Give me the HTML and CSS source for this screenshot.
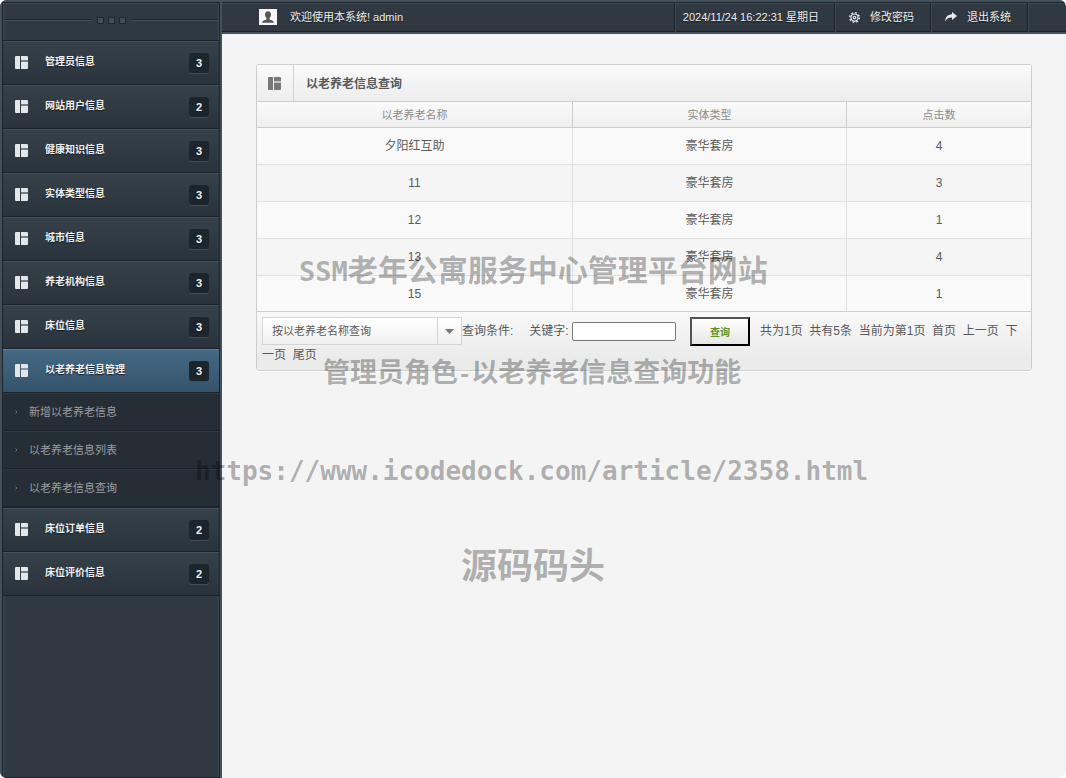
FILE: index.html
```html
<!DOCTYPE html>
<html lang="zh-CN">
<head>
<meta charset="utf-8">
<title>以老养老信息查询</title>
<link rel="stylesheet" href="styles.css">
</head>
<body>
<svg class="defs" width="0" height="0" aria-hidden="true">
  <symbol id="blocks" viewBox="0 0 14 13"><path d="M1 0h4v13H1a1 1 0 0 1-1-1V1a1 1 0 0 1 1-1zM6 0H12a1 1 0 0 1 1 1v3H6zM6 6H13v6a1 1 0 0 1-1 1H6z"/><path opacity=".4" d="M6 4h7v2H6z"/></symbol>
</svg>
<div class="shell">
  <aside class="sidebar">
    <div class="grip"><i></i><b></b><b></b><b></b><i></i></div>
    <nav class="menu">
      <a class="item" href="#"><svg class="ico"><use href="#blocks"/></svg><span class="label">管理员信息</span><span class="badge">3</span></a>
      <a class="item" href="#"><svg class="ico"><use href="#blocks"/></svg><span class="label">网站用户信息</span><span class="badge">2</span></a>
      <a class="item" href="#"><svg class="ico"><use href="#blocks"/></svg><span class="label">健康知识信息</span><span class="badge">3</span></a>
      <a class="item" href="#"><svg class="ico"><use href="#blocks"/></svg><span class="label">实体类型信息</span><span class="badge">3</span></a>
      <a class="item" href="#"><svg class="ico"><use href="#blocks"/></svg><span class="label">城市信息</span><span class="badge">3</span></a>
      <a class="item" href="#"><svg class="ico"><use href="#blocks"/></svg><span class="label">养老机构信息</span><span class="badge">3</span></a>
      <a class="item" href="#"><svg class="ico"><use href="#blocks"/></svg><span class="label">床位信息</span><span class="badge">3</span></a>
      <a class="item active" href="#"><svg class="ico"><use href="#blocks"/></svg><span class="label">以老养老信息管理</span><span class="badge">3</span></a>
      <div class="submenu">
        <a class="sub" href="#"><svg class="chev" viewBox="0 0 3 4"><path d="M.5 .5L2 2L.5 3.500"/></svg>新增以老养老信息</a>
        <a class="sub" href="#"><svg class="chev" viewBox="0 0 3 4"><path d="M.5 .5L2 2L.5 3.500"/></svg>以老养老信息列表</a>
        <a class="sub" href="#"><svg class="chev" viewBox="0 0 3 4"><path d="M.5 .5L2 2L.5 3.500"/></svg>以老养老信息查询</a>
      </div>
      <a class="item" href="#"><svg class="ico"><use href="#blocks"/></svg><span class="label">床位订单信息</span><span class="badge">2</span></a>
      <a class="item" href="#"><svg class="ico"><use href="#blocks"/></svg><span class="label">床位评价信息</span><span class="badge">2</span></a>
    </nav>
  </aside>
  <div class="page">
    <header class="topbar">
      <div class="welcome">
        <svg class="avatar" viewBox="0 0 18 16"><rect width="18" height="16" fill="#f6f6f6"/><path fill="#555" d="M9 2.300c2 0 3 1.300 3 3.200 0 1.500-.6 2.800-1.500 3.500v1.200c.3.700 4.300 1.100 4.500 3.500H3c.2-2.400 4.200-2.800 4.500-3.500V9C6.600 8.300 6 7 6 5.500c0-1.900 1-3.200 3-3.200z"/></svg>
        <span>欢迎使用本系统! admin</span>
      </div>
      <div class="cell date">2024/11/24 16:22:31 星期日</div>
      <a class="cell" href="#"><svg class="gear" viewBox="0 0 10 10" fill="none" stroke="#e8eaec"><circle cx="5" cy="5" r="4.400" stroke-width="1.200" stroke-dasharray="1.700 1.750"/><circle cx="5" cy="5" r="3.200" stroke-width="1.100"/><circle cx="5" cy="5" r="1.200" stroke-width="1"/></svg>修改密码</a>
      <a class="cell" href="#"><svg class="share" viewBox="0 0 12 10"><path fill="#e8eaec" d="M7 0l5 4-5 4V5.600C4 5.500 2 6.200.3 9.600 0 5.500 2.500 2.500 7 2.300z"/></svg>退出系统</a>
      <div class="cell tail"></div>
    </header>
    <main class="content">
      <section class="panel">
        <div class="panel-head"><span class="panel-ico"><svg class="ico"><use href="#blocks"/></svg></span><h1>以老养老信息查询</h1></div>
        <table>
          <colgroup><col class="c-name"><col class="c-type"><col></colgroup>
          <thead><tr><th>以老养老名称</th><th>实体类型</th><th>点击数</th></tr></thead>
          <tbody>
            <tr><td>夕阳红互助</td><td>豪华套房</td><td>4</td></tr>
            <tr><td>11</td><td>豪华套房</td><td>3</td></tr>
            <tr><td>12</td><td>豪华套房</td><td>1</td></tr>
            <tr><td>13</td><td>豪华套房</td><td>4</td></tr>
            <tr><td>15</td><td>豪华套房</td><td>1</td></tr>
          </tbody>
        </table>
        <form class="panel-foot"><span class="picker"><select id="field" aria-label="查询条件"><option>按以老养老名称查询</option></select><svg class="arrow" viewBox="0 0 9 5"><path d="M0 0h9L4.500 5z"/></svg></span><label class="cond" for="field">查询条件:</label><label for="kw">关键字:</label> <input id="kw" type="text"><button type="button">查询</button><span class="pager">共为1页&nbsp; 共有5条&nbsp; 当前为第1页&nbsp; <a href="#">首页</a>&nbsp; <a href="#">上一页</a>&nbsp; <a href="#">下一页</a>&nbsp; <a href="#">尾页</a></span></form>
      </section>
    </main>
  </div>
  <div class="mark mark-a"><span class="latin">SSM</span>老年公寓服务中心管理平台网站</div>
  <div class="mark mark-b">管理员角色<span class="latin">-</span>以老养老信息查询功能</div>
  <div class="mark mark-c">https://www.icodedock.com/article/2358.html</div>
  <div class="mark mark-d">源码码头</div>
</div>
</body>
</html>
```

FILE: styles.css
```css
* { box-sizing: border-box; }
html { background: #fff; }
body {
  margin: 0;
  font: 12px/18px "Liberation Sans", "Noto Sans CJK SC", sans-serif;
  color: #595959;
}
a { color: inherit; text-decoration: none; }
.defs { position: absolute; }

.shell {
  position: relative;
  display: grid;
  grid-template-columns: 222px 1fr;
  min-height: 100vh;
  overflow: hidden;
  border-radius: 7px;
  background: #f4f4f4;
}

/* Sidebar */
.sidebar {
  border: solid #434f59;
  border-width: 2px 2px 0;
  background: #303842;
  box-shadow: inset 1px 1px #1b242c, inset -1px -1px #1b242c, inset 2px 2px #3d4953, inset -2px 0 #3d4953;
}
.grip {
  display: flex;
  align-items: center;
  gap: 4px;
  height: 38px;
  padding: 0 2px 2px;
}
.grip i { flex: 1; height: 2px; border-top: 1px solid #1f2831; border-bottom: 1px solid #414d57; }
.grip b { width: 7px; height: 7px; border: 1px solid #1f2831; background: #414e58; }
.grip i:first-child { margin-right: 1px; }
.grip i:last-child { margin-left: 1px; }
.menu { padding: 0 1px; border-bottom: 1px solid #1b242c; }
.item {
  display: flex;
  align-items: center;
  height: 44px;
  padding: 0 10px 0 12px;
  border-top: 1px solid #1b242c;
  background: linear-gradient(#36414a, #2a333c);
  box-shadow: inset 0 1px #44515b;
  color: #f2f2f2;
  font-size: 10px;
  font-weight: bold;
  text-shadow: 0 1px 1px #151b20;
}
.item.active {
  background: linear-gradient(#456a85, #34536a);
  box-shadow: inset 0 1px #5f8199;
}
.ico { flex: none; width: 14px; height: 13px; fill: #e4e5e6; }
.label { flex: 1; padding: 0 0 2px 16px; }
.badge {
  width: 20px;
  height: 20px;
  border-radius: 3px;
  background: #1c252c;
  box-shadow: 0 1px #414e58;
  font-size: 11px;
  line-height: 20px;
  text-align: center;
}
.submenu { border-top: 1px solid #1b242c; background: #1b242c; }
.sub {
  display: flex;
  align-items: center;
  gap: 11px;
  height: 38px;
  padding-left: 12px;
  border-bottom: 1px solid #1b242c;
  background: #252d35;
  box-shadow: inset 0 1px #2f3941;
  color: #9a9fa3;
  font-size: 11px;
}
.chev { width: 3px; height: 4px; fill: none; stroke: #8b9196; stroke-width: .7; }

/* Top bar */
.page { min-width: 0; }
.topbar {
  display: flex;
  height: 34px;
  border: solid #434f59;
  border-width: 2px 0;
  background: #303842;
  box-shadow: inset 0 1px #1b242c, inset 0 -1px #1b242c, inset 0 2px #3d4953;
  color: #edeff0;
  font-size: 11px;
  text-shadow: 0 1px 1px #151b20;
}
.welcome { flex: 1; display: flex; align-items: center; gap: 13px; padding-left: 37px; }
.avatar { width: 18px; height: 16px; }
.cell {
  display: flex;
  align-items: center;
  gap: 10px;
  height: 30px;
  padding: 0 16px 0 14px;
  border-left: 1px solid #1b242c;
  box-shadow: inset 1px 0 #3d4953, inset 0 -1px #1b242c;
}
.date { padding: 0 15px 0 8px; }
.tail { width: 39px; padding: 0; }
.gear { width: 11px; height: 11px; }
.share { width: 12px; height: 10px; }

/* Panel */
.content { padding: 30px 34px; }
.panel {
  border: 1px solid #cdcdcd;
  border-radius: 3px;
  background: #f9f9f9;
  box-shadow: 0 1px #fff;
  overflow: hidden;
}
.panel-head {
  display: flex;
  height: 37px;
  border-bottom: 1px solid #cdcdcd;
  background: linear-gradient(#fafafa, #ededed);
}
.panel-ico {
  display: flex;
  align-items: center;
  justify-content: center;
  width: 37px;
  border-right: 1px solid #d3d3d3;
}
.panel-ico .ico { fill: #777; }
h1 { margin: 0; padding-left: 12px; font-size: 12px; line-height: 38px; }
table { width: 100%; table-layout: fixed; border-collapse: separate; border-spacing: 0; }
.c-name { width: 40.7%; }
.c-type { width: 35.4%; }
th, td { padding: 0; text-align: center; border-left: 1px solid #dfdfdf; }
th:first-child, td:first-child { border-left: 0; }
th {
  height: 26px;
  border-bottom: 1px solid #cdcdcd;
  border-left-color: #cdcdcd;
  background: linear-gradient(#fafafa, #efefef);
  color: #8c8c8c;
  font-size: 11px;
  font-weight: normal;
}
td { height: 37px; border-bottom: 1px solid #dfdfdf; }
tbody tr:nth-child(even) { background: #f5f5f5; }
tbody tr:last-child td { height: 36px; border-bottom-color: #cdcdcd; }
.panel-foot { padding: 5px 5px 6px; background: linear-gradient(#f9f9f9, #ebebeb 80%); }
.picker { position: relative; display: inline-block; width: 200px; height: 29px; vertical-align: middle; }
select {
  width: 100%;
  height: 28px;
  padding: 0 26px 0 9px;
  border: 1px solid #d5d5d5;
  border-radius: 0;
  appearance: none;
  background: linear-gradient(#d5d5d5, #d5d5d5) right 23px top / 1px 100% no-repeat, linear-gradient(#fff, #f1f1f1);
  color: #595959;
  font: 11px "Liberation Sans", "Noto Sans CJK SC", sans-serif;
}
.arrow { position: absolute; right: 8px; top: 12px; width: 9px; height: 5px; fill: #777; pointer-events: none; }
.cond { margin-right: 16px; }
input {
  width: 104px;
  height: 19px;
  padding: 1px 2px;
  border: 1px solid #767676;
  border-radius: 2px;
  background: #fff;
  vertical-align: middle;
  font: 12px "Liberation Sans", "Noto Sans CJK SC", sans-serif;
}
button {
  width: 60px;
  height: 29px;
  margin: 0 10px 0 14px;
  padding: 0;
  border: 2px outset #000;
  background: linear-gradient(#fff, #e6e6e6);
  color: #5c9425;
  font: bold 10px "Liberation Sans", "Noto Sans CJK SC", sans-serif;
  vertical-align: middle;
}

/* Watermark over the whole page */
.mark {
  position: absolute;
  color: rgba(0, 0, 0, .3);
  font-family: "Noto Sans CJK SC", sans-serif;
  font-weight: bold;
  line-height: 40px;
  white-space: nowrap;
  pointer-events: none;
}
.latin, .mark-c { font-family: "DejaVu Sans Mono", monospace; }
.mark-a { left: 299px; top: 248px; font-size: 30px; }
.mark-a .latin { font-size: 27px; }
.mark-b { left: 323px; top: 351px; font-size: 27px; }
.mark-b .latin { font-size: 22px; }
.mark-c { left: 195px; top: 451px; font-size: 26px; }
.mark-d { left: 461px; top: 543px; font-size: 36px; }
```
